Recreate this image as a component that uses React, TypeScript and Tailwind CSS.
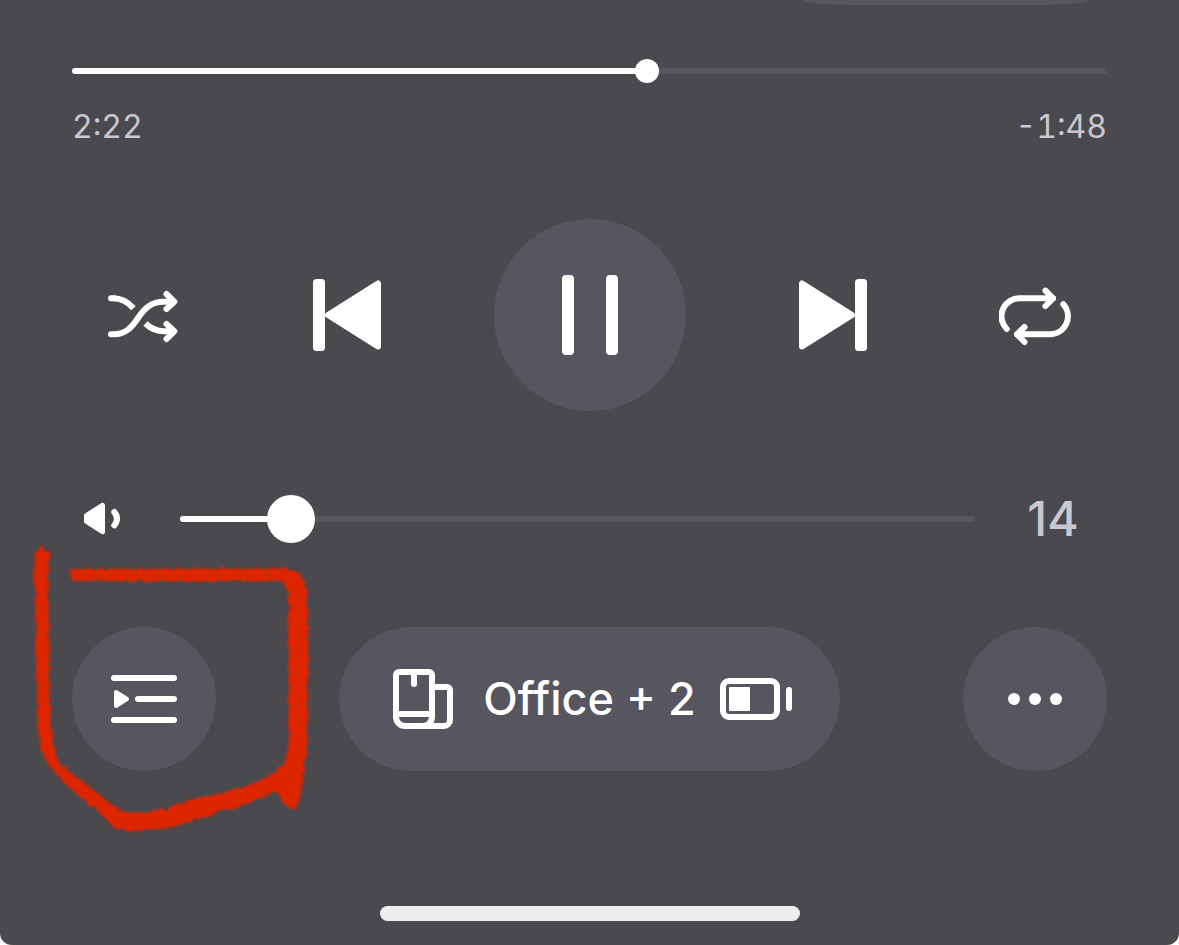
import { useState } from "react";
import type { ReactNode } from "react";
import { clsx } from "clsx";

type IconButtonProps = {
  label: string;
  className?: string;
  onClick?: () => void;
  children: ReactNode;
};

const IconButton = ({ label, className, onClick, children }: IconButtonProps) => (
  <button
    type="button"
    aria-label={label}
    onClick={onClick}
    className={clsx(
      "flex shrink-0 cursor-pointer items-center justify-center rounded-full",
      className
    )}
  >
    {children}
  </button>
);

type SliderProps = {
  label: string;
  value: number;
  onChange: (value: number) => void;
  large?: boolean;
};

const Slider = ({ label, value, onChange, large }: SliderProps) => (
  <div className="grid flex-1 items-center">
    <div className="col-start-1 row-start-1 h-1.5 overflow-hidden rounded-full bg-[#575560]">
      <div className="h-full bg-white" style={{ width: `${value}%` }} />
    </div>
    {/* the input is half a thumb wider on each side, so the thumb centre follows the track */}
    <input
      type="range"
      aria-label={label}
      min={0}
      max={100}
      step={0.1}
      value={value}
      onChange={(e) => onChange(Number(e.target.value))}
      className={clsx(
        "col-start-1 row-start-1 cursor-pointer appearance-none bg-transparent [&::-webkit-slider-thumb]:appearance-none [&::-webkit-slider-thumb]:rounded-full [&::-webkit-slider-thumb]:bg-white",
        large
          ? "-mx-6 h-12 [&::-webkit-slider-thumb]:size-12"
          : "-mx-3 h-6 [&::-webkit-slider-thumb]:size-6"
      )}
    />
  </div>
);

type IconProps = { className?: string; children: ReactNode };

const Icon = ({ className = "size-18", children }: IconProps) => (
  <svg
    viewBox="0 0 72 72"
    fill="none"
    stroke="currentColor"
    strokeWidth={6}
    strokeLinecap="round"
    strokeLinejoin="round"
    className={className}
    aria-hidden="true"
  >
    {children}
  </svg>
);

const ShuffleIcon = () => (
  <Icon>
    <path d="M3 55.3H6C17 55.3 23.5 49 30 39C37 28.500 44 22.700 55 22.700H65" />
    <path d="M58.500 15L66.300 22.700L58.500 30" />
    <path d="M58.500 45L66.300 52.300L58.500 60" />
    <path d="M3 19.300H6" />
    <path strokeLinecap="butt" d="M5 19.300C14 19.300 20 23 25.500 29.300" />
    <path strokeLinecap="butt" d="M37.500 44.500C43 49.800 49 52.300 56 52.300H65" />
  </Icon>
);

const PreviousIcon = () => (
  <Icon>
    <rect x="2" width="12" height="72" rx="3.500" fill="currentColor" stroke="none" />
    <path d="M67 4.500V67.500L17 36Z" fill="currentColor" />
  </Icon>
);

const NextIcon = () => (
  <Icon>
    <rect x="59" width="12" height="72" rx="3.500" fill="currentColor" stroke="none" />
    <path d="M6 4.500V67.500L56 36Z" fill="currentColor" />
  </Icon>
);

const RepeatIcon = () => (
  <Icon>
    <path d="M7.700 50A18 18 0 0 1 21 19.300H54" />
    <path d="M46.500 11.700L54 19.300L46.500 27" />
    <path d="M64.300 25.300A18 18 0 0 1 51 55.300H18" />
    <path d="M25.500 48L18 55.300L25.500 63" />
  </Icon>
);

const QueueIcon = () => (
  <Icon>
    <path d="M6 15H66M30 36H66M6 57H66" />
    <path d="M8 29V43L19 36Z" fill="currentColor" strokeWidth={4} />
  </Icon>
);

const SpeakersIcon = () => (
  <Icon>
    <path d="M45 24H60A3 3 0 0 1 63 27V57A6 6 0 0 1 57 63H18A9 9 0 0 1 9 54V12A3 3 0 0 1 12 9H42A3 3 0 0 1 45 12V54A9 9 0 0 1 36 63" />
    <path d="M9 51H45" />
    <path d="M27 11V21" />
  </Icon>
);

const BatteryIcon = () => (
  <Icon>
    <rect x="3" y="18" width="54" height="36" rx="6" />
    <rect x="9" y="24" width="21" height="24" rx="1" fill="currentColor" stroke="none" />
    <path d="M69 27V45" />
  </Icon>
);

const MoreIcon = () => (
  <Icon>
    <g fill="currentColor" stroke="none">
      <circle cx="15" cy="36" r="6" />
      <circle cx="36" cy="36" r="6" />
      <circle cx="57" cy="36" r="6" />
    </g>
  </Icon>
);

const VolumeIcon = () => (
  <svg
    viewBox="0 0 36 36"
    fill="none"
    stroke="currentColor"
    strokeLinecap="round"
    strokeLinejoin="round"
    className="size-9"
    aria-hidden="true"
  >
    <path
      d="M18.500 4.300V30.700L2.500 20.500V14.500Z"
      fill="currentColor"
      strokeWidth={5}
    />
    <path d="M30.300 11Q35.700 17.700 30.300 24.300" strokeWidth={6} />
  </svg>
);

// hand drawn marker around the queue button
const MarkerStroke = () => (
  <svg
    viewBox="0 0 900 930"
    className="pointer-events-none absolute -top-[97px] -left-[52px] h-[310px] w-[300px] max-w-none overflow-visible"
    aria-hidden="true"
  >
    <filter id="rough" x="-5%" y="-5%" width="110%" height="110%">
      <feTurbulence type="fractalNoise" baseFrequency="0.06" numOctaves={2} seed={4} />
      <feDisplacementMap
        in="SourceGraphic"
        scale={18}
        xChannelSelector="R"
        yChannelSelector="G"
      />
      <feGaussianBlur stdDeviation={3} />
    </filter>
    <path
      filter="url(#rough)"
      fill="#dd2503"
      stroke="#dd2503"
      strokeWidth={6}
      strokeLinejoin="round"
      d="M65 48L48 75L46 150L50 190L48 240L52 300L48 340L54 480L56 600L66 660L90 705L130 750L190 805L240 845L285 892L335 902L400 893L450 892L490 875L560 855L600 840L640 835L700 812L775 780L790 820L822 838L842 790L850 700L860 640L858 500L862 400L860 250L855 165L835 130L800 118L150 120L160 150L790 150L808 180L806 280L810 380L808 500L810 660L795 700L760 735L700 765L600 793L540 805L500 815L440 838L380 850L320 848L280 830L210 775L150 730L115 700L98 650L88 560L84 420L86 330L82 230L80 190L84 70Z"
    />
  </svg>
);

export default function App() {
  const [progress, setProgress] = useState(55.6);
  const [volume, setVolume] = useState(14);
  const [playing, setPlaying] = useState(true);

  return (
    <div className="bg-white font-['Inter','Liberation_Sans',sans-serif]">
      <main className="flex min-h-screen flex-col overflow-hidden rounded-b-xl bg-[#4a494e] px-18 text-white">
        <div className="mr-[18px] h-[5px] w-[286px] self-end rounded-b-[48px_5px] bg-[#575560]" />

        <section className="mt-[54px]">
          <Slider label="Track position" value={progress} onChange={setProgress} />
          <div className="mt-7 flex justify-between text-[32px] leading-8 text-[#c9c7cf] tabular-nums">
            <span>2:22</span>
            <span>-1:48</span>
          </div>
        </section>

        <section className="mt-[76px] flex items-center justify-between px-4">
          <IconButton label="Shuffle" className="size-28">
            <ShuffleIcon />
          </IconButton>
          <IconButton label="Previous" className="size-28">
            <PreviousIcon />
          </IconButton>
          <IconButton
            label={playing ? "Pause" : "Play"}
            className="size-48 bg-[#575560]"
            onClick={() => setPlaying(!playing)}
          >
            <svg viewBox="0 0 80 80" fill="currentColor" className="size-20" aria-hidden="true">
              {playing ? (
                <>
                  <rect x="12" width="12" height="80" rx="4" />
                  <rect x="56" width="12" height="80" rx="4" />
                </>
              ) : (
                <path d="M16 4V76L72 40Z" />
              )}
            </svg>
          </IconButton>
          <IconButton label="Next" className="size-28">
            <NextIcon />
          </IconButton>
          <IconButton label="Repeat" className="size-28">
            <RepeatIcon />
          </IconButton>
        </section>

        <section className="mt-21 flex items-center">
          <IconButton label="Mute" className="mr-12 h-12 w-15">
            <VolumeIcon />
          </IconButton>
          <Slider label="Volume" value={volume} onChange={setVolume} large />
          <span className="ml-6 w-27 text-center text-5xl leading-12 font-medium text-[#c9c7cf]">
            {Math.round(volume)}
          </span>
        </section>

        <section className="mt-21 flex items-center justify-between">
          <div className="relative">
            <IconButton label="Queue" className="size-36 bg-[#575560]">
              <QueueIcon />
            </IconButton>
            <MarkerStroke />
          </div>
          <button
            type="button"
            className="flex h-36 cursor-pointer items-center gap-6 rounded-full bg-[#575560] px-12 text-[45px] leading-12 font-medium whitespace-nowrap"
          >
            <SpeakersIcon />
            <span>Office + 2</span>
            <BatteryIcon />
          </button>
          <IconButton label="More" className="size-36 bg-[#575560]">
            <MoreIcon />
          </IconButton>
        </section>

        <div className="mt-auto mb-6 h-[15px] w-[420px] self-center rounded-full bg-[#eeeeee]" />
      </main>
    </div>
  );
}
